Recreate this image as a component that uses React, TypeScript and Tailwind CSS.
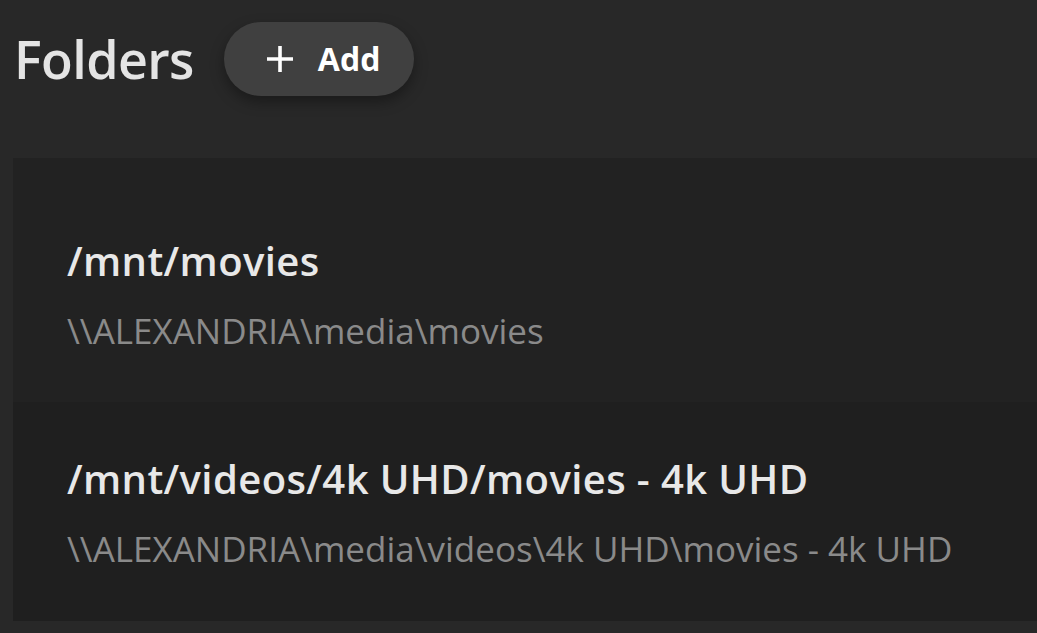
import React from "react";

const rows = [
  { title: "/mnt/movies", path: "\\\\ALEXANDRIA\\media\\movies" },
  { title: "/mnt/videos/4k UHD/movies - 4k UHD", path: "\\\\ALEXANDRIA\\media\\videos\\4k UHD\\movies - 4k UHD" },
];

export default function App() {
  return (
    <div className="min-h-[633px] w-full overflow-hidden bg-[#282828] font-['Open_Sans','Noto_Sans',sans-serif]">
      <div className="flex items-center pl-[14px] pt-[22px]">
        <h1 className="text-[52px] leading-[74px] font-semibold text-[#e4e4e4] tracking-[-0.6px]">Folders</h1>
        <button className="ml-[30px] flex h-[74px] w-[190px] items-center rounded-full bg-[#404040] pl-[42px] shadow-[0_6px_14px_rgba(0,0,0,0.35)]">
          <svg width="28" height="28" viewBox="0 0 28 28" className="shrink-0">
            <path d="M14 1v26M1 14h26" stroke="#ffffff" strokeWidth="3.6" strokeLinecap="butt" />
          </svg>
          <span className="ml-[24px] text-[32px] font-bold text-white leading-none">Add</span>
        </button>
      </div>
      <div className="ml-[13px] mt-[62px] flex flex-col">
        {rows.map((r, i) => (
          <div
            key={i}
            className={
              i === 0
                ? "h-[244px] bg-[#222222] pl-[54px] pt-[78px]"
                : "h-[219px] bg-[#1f1f1f] pl-[54px] pt-[52px]"
            }
          >
            <div className="text-[40px] leading-[50px] font-semibold text-[#e8e8e8] tracking-[0.4px] whitespace-nowrap">{r.title}</div>
            <div className="mt-[23px] text-[35px] leading-[44px] text-[#8a8a8a] whitespace-nowrap">{r.path}</div>
          </div>
        ))}
      </div>
    </div>
  );
}
